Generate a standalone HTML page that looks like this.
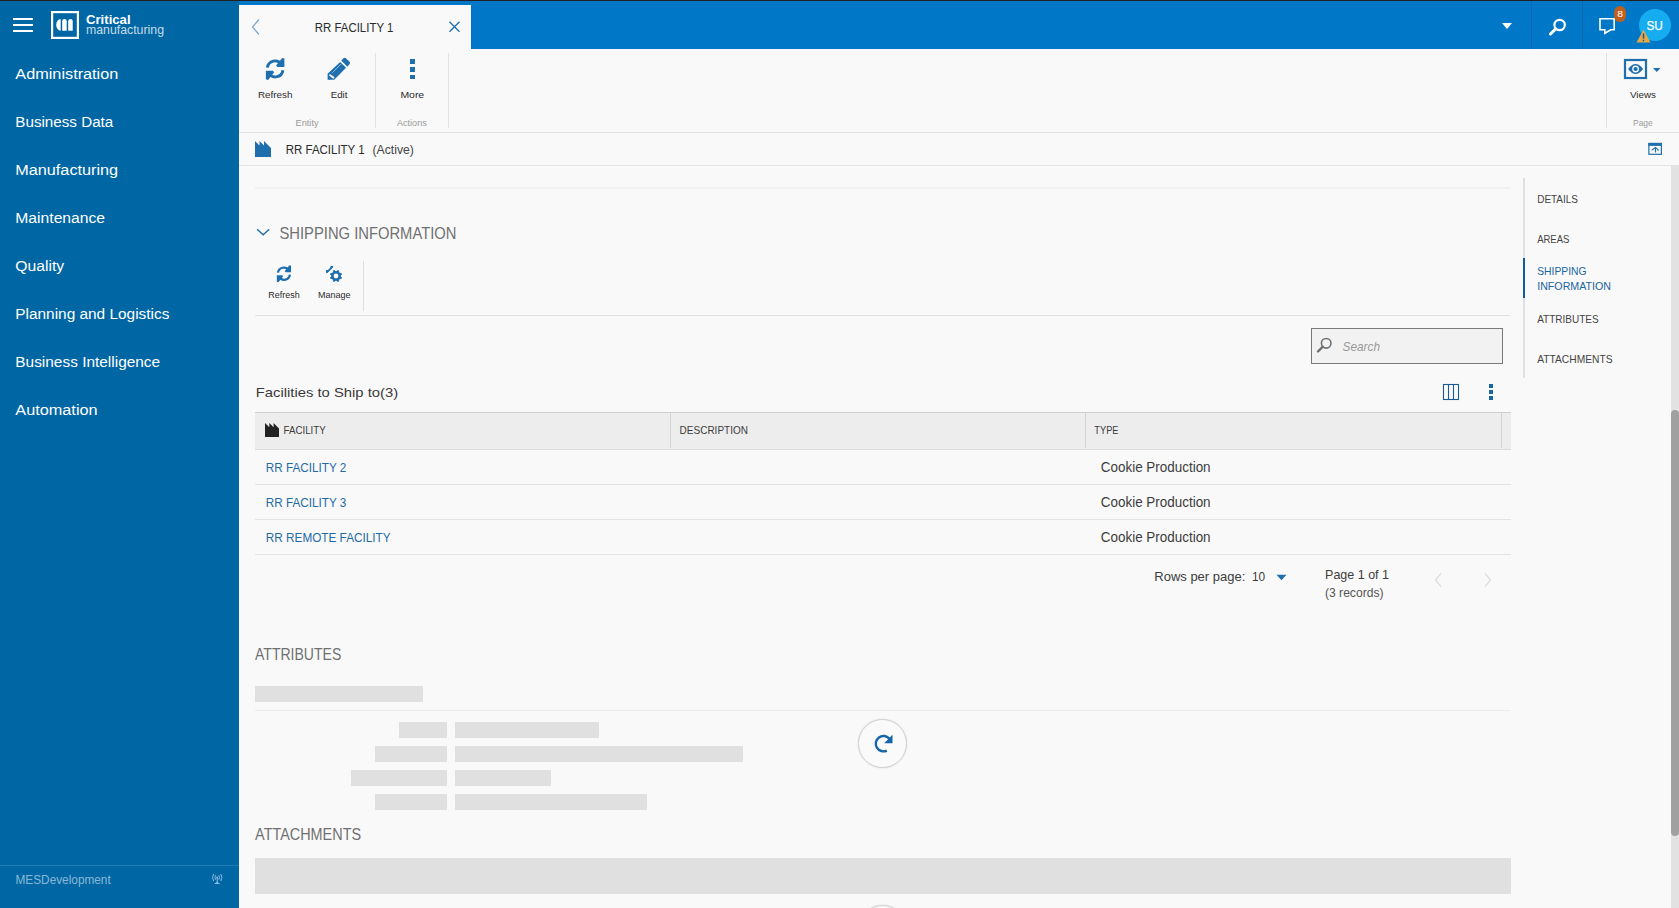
<!DOCTYPE html>
<html><head><meta charset="utf-8"><title>RR FACILITY 1</title>
<style>
html,body{margin:0;padding:0;width:1679px;height:908px;overflow:hidden;background:#f9f9f9;font-family:"Liberation Sans",sans-serif;}
.t{position:absolute;white-space:nowrap;}
.r{position:absolute;display:block;}
</style></head><body>
<div class="r" style="left:0px;top:0px;width:1679px;height:1px;background:#231f20;"></div>
<div class="r" style="left:0px;top:1px;width:239px;height:907px;background:#0066a4;"></div>
<div class="r" style="left:239px;top:1px;width:1440px;height:48px;background:#0077c7;"></div>
<div class="r" style="left:239px;top:5px;width:232px;height:44px;background:#f9f9f9;"></div>
<div class="r" style="left:1531px;top:1px;width:1px;height:48px;background:#0a68b0;"></div>
<div class="r" style="left:1582px;top:1px;width:1px;height:48px;background:#0a68b0;"></div>
<div class="r" style="left:13px;top:18px;width:20px;height:2px;background:#fff;"></div>
<div class="r" style="left:13px;top:24px;width:20px;height:2px;background:#fff;"></div>
<div class="r" style="left:13px;top:30px;width:20px;height:2px;background:#fff;"></div>
<svg class="r" style="left:50px;top:10px;" width="30" height="30" viewBox="0 0 30 30"><rect x="2.1" y="2.1" width="25.8" height="25.8" fill="none" stroke="#fff" stroke-width="2.2"/><path d="M10.7 9 A4.5 5.9 0 0 0 10.7 20.8 Z" fill="#fff"/><path d="M12.2 20.8 V11.25 A2.25 2.25 0 0 1 16.7 11.25 V20.8 Z" fill="#fff"/><path d="M18.2 20.8 V11.25 A2.25 2.25 0 0 1 22.7 11.25 V20.8 Z" fill="#fff"/></svg>
<div class="r" style="left:0px;top:865px;width:239px;height:1px;background:rgba(255,255,255,0.15);"></div>
<svg class="r" style="left:200px;top:866px;" width="32" height="26" viewBox="0 0 32 26"><g stroke="#8fbde6" fill="none" stroke-width="1"><path d="M13.6 8 Q11.4 11.5 13.6 15 M15.5 9.3 Q14.3 11.5 15.5 13.7 M18.9 9.3 Q20.1 11.5 18.9 13.7 M20.8 8 Q23 11.5 20.8 15"/><path d="M17.2 11.2 V16.8"/></g><path d="M14 17.9 H20.2 L17.2 15.8 Z" fill="#8fbde6"/><circle cx="17.2" cy="11.4" r="0.9" fill="#8fbde6"/></svg>
<svg class="r" style="left:250px;top:18px;" width="12" height="18" viewBox="0 0 12 18"><path d="M9 1.5 L2.5 9 L9 16.5" fill="none" stroke="#7da7cc" stroke-width="1.2"/></svg>
<svg class="r" style="left:448px;top:20px;" width="13" height="13" viewBox="0 0 13 13"><path d="M1.5 1.8 L11.5 11.8 M11.5 1.8 L1.5 11.8" fill="none" stroke="#1f6ead" stroke-width="1.3"/></svg>
<svg class="r" style="left:1500px;top:21px;" width="14" height="9" viewBox="0 0 14 9"><path d="M2 2 H12 L7 8 Z" fill="#fff"/></svg>
<svg class="r" style="left:1547px;top:16px;" width="22" height="22" viewBox="0 0 22 22"><circle cx="12.6" cy="9" r="5.2" fill="none" stroke="#fff" stroke-width="2.2"/><path d="M8.8 12.8 L3.5 18" stroke="#fff" stroke-width="3" stroke-linecap="round"/></svg>
<svg class="r" style="left:1597px;top:16px;" width="22" height="20" viewBox="0 0 22 20"><path d="M3 2.8 H17.2 V13.7 H13.8 L7.8 17.3 V13.7 H3 Z" fill="none" stroke="#fff" stroke-width="1.6" stroke-linejoin="miter"/></svg>
<div class="r" style="left:1614px;top:6px;width:12px;height:16px;background:#bf5f1f;border-radius:6px"></div>
<div class="r" style="left:1639px;top:9px;width:32px;height:32px;background:#16acf0;border-radius:50%"></div>
<svg class="r" style="left:1636px;top:29px;" width="16" height="15" viewBox="0 0 16 15"><path d="M7.5 0.8 L14.5 13.5 H0.5 Z" fill="#e7a84a"/><path d="M7.5 4.5 V9.5 M7.5 10.8 V12.3" stroke="#1c4f80" stroke-width="1.4"/></svg>
<div class="r" style="left:239px;top:132px;width:1440px;height:1px;background:#e3e3e3;"></div>
<div class="r" style="left:375px;top:53px;width:1px;height:75px;background:#e2e2e2;"></div>
<div class="r" style="left:448px;top:53px;width:1px;height:75px;background:#e2e2e2;"></div>
<div class="r" style="left:1606px;top:53px;width:1px;height:75px;background:#e2e2e2;"></div>
<svg class="r" style="left:262px;top:55px;" width="26" height="26" viewBox="0 0 26 26"><g transform="translate(0,0)"><path d="M5.4 12.6 A7.7 7.7 0 0 1 19.4 9.3" fill="none" stroke="#1f6ead" stroke-width="2.9"/><path d="M20.2 2.9 L22.4 3.6 V12 H15.4 L14.1 10.6 Z" fill="#1f6ead"/><g transform="rotate(180 13.15 13.9)"><path d="M5.4 12.6 A7.7 7.7 0 0 1 19.4 9.3" fill="none" stroke="#1f6ead" stroke-width="2.9"/><path d="M20.2 2.9 L22.4 3.6 V12 H15.4 L14.1 10.6 Z" fill="#1f6ead"/></g></g></svg>
<svg class="r" style="left:324px;top:54px;" width="30" height="30" viewBox="0 0 30 30"><path d="M3.6 25.8 V19.8 L16.2 7.9 L22 13.7 L10.2 25.8 Z" fill="#1f6ead"/><path d="M17.2 6.4 L19.6 4.2 Q20.8 3.3 21.9 4.2 L25.6 7.7 Q26.6 8.8 25.6 10 L23.5 12.7 Z" fill="#1f6ead"/><path d="M8.3 18.8 L17.2 9.9" stroke="#fff" stroke-width="0.7" opacity="0.75"/><path d="M6.2 21.2 L9.4 23.6" stroke="#fff" stroke-width="2" stroke-linecap="round" opacity="0.9"/></svg>
<div class="r" style="left:410px;top:59px;width:4.5px;height:4.5px;background:#1f6ead;"></div>
<div class="r" style="left:410px;top:67px;width:4.5px;height:4.5px;background:#1f6ead;"></div>
<div class="r" style="left:410px;top:74.5px;width:4.5px;height:4.5px;background:#1f6ead;"></div>
<svg class="r" style="left:1623px;top:58px;" width="26" height="22" viewBox="0 0 26 22"><rect x="2" y="2" width="21" height="18" fill="none" stroke="#1f6ead" stroke-width="2.2"/><path d="M5.1 11 Q12.6 1 20.1 11 Q12.6 21 5.1 11 Z" fill="#1f6ead"/><circle cx="12.6" cy="11" r="3.4" fill="#fbfbfb"/><circle cx="12.6" cy="11" r="2.1" fill="#1f6ead"/></svg>
<svg class="r" style="left:1652px;top:67px;" width="10" height="6" viewBox="0 0 10 6"><path d="M1 1 H8.5 L4.75 5 Z" fill="#1f6ead"/></svg>
<div class="r" style="left:239px;top:165px;width:1440px;height:1px;background:#e3e3e3;"></div>
<svg class="r" style="left:254px;top:140px;" width="18" height="18" viewBox="0 0 18 18"><path d="M1 17 V1 L5.5 5.5 V1 L10 5.5 V1 L17 8 V17 Z" fill="#1f6ead"/></svg>
<svg class="r" style="left:1640px;top:136px;" width="28" height="26" viewBox="0 0 28 26"><rect x="8.9" y="7.5" width="12.5" height="10.8" fill="none" stroke="#1f6ead" stroke-width="1.2"/><rect x="8.3" y="6.9" width="13.7" height="3" fill="#1f6ead"/><path d="M15.5 16.6 V11.6 M11.7 14.3 L15.5 11.4 L18.6 14.5" fill="none" stroke="#1f6ead" stroke-width="1.1"/></svg>
<div class="r" style="left:1671px;top:166px;width:8px;height:742px;background:#e2e2e2;"></div>
<div class="r" style="left:1671px;top:410px;width:8px;height:426px;background:#a0a0a0;border-radius:4px"></div>
<div class="r" style="left:1523px;top:178px;width:2px;height:200px;background:#e0e0e0;"></div>
<div class="r" style="left:1523px;top:258px;width:2px;height:40px;background:#0f5a9c;"></div>
<div class="r" style="left:255px;top:187px;width:1255px;height:2px;background:#f1f1f1;"></div>
<svg class="r" style="left:255px;top:226px;" width="16" height="11" viewBox="0 0 16 11"><path d="M2.1 3.2 L8.15 8.7 L14.2 3.2" fill="none" stroke="#1f6ead" stroke-width="1.4"/></svg>
<svg class="r" style="left:273px;top:262px;" width="24" height="24" viewBox="0 0 24 24"><g transform="translate(0.8,1.0) scale(0.77)"><g transform="translate(0,0)"><path d="M5.4 12.6 A7.7 7.7 0 0 1 19.4 9.3" fill="none" stroke="#1f6ead" stroke-width="2.9"/><path d="M20.2 2.9 L22.4 3.6 V12 H15.4 L14.1 10.6 Z" fill="#1f6ead"/><g transform="rotate(180 13.15 13.9)"><path d="M5.4 12.6 A7.7 7.7 0 0 1 19.4 9.3" fill="none" stroke="#1f6ead" stroke-width="2.9"/><path d="M20.2 2.9 L22.4 3.6 V12 H15.4 L14.1 10.6 Z" fill="#1f6ead"/></g></g></g></svg>
<svg class="r" style="left:322px;top:262px;" width="24" height="24" viewBox="0 0 24 24"><g fill="#1f6ead"><circle cx="14" cy="14" r="4.9"/><rect x="12.9" y="7.9" width="2.2" height="3" transform="rotate(22.5 14 14)"/><rect x="12.9" y="7.9" width="2.2" height="3" transform="rotate(67.5 14 14)"/><rect x="12.9" y="7.9" width="2.2" height="3" transform="rotate(112.5 14 14)"/><rect x="12.9" y="7.9" width="2.2" height="3" transform="rotate(157.5 14 14)"/><rect x="12.9" y="7.9" width="2.2" height="3" transform="rotate(202.5 14 14)"/><rect x="12.9" y="7.9" width="2.2" height="3" transform="rotate(247.5 14 14)"/><rect x="12.9" y="7.9" width="2.2" height="3" transform="rotate(292.5 14 14)"/><rect x="12.9" y="7.9" width="2.2" height="3" transform="rotate(337.5 14 14)"/><path d="M5.6 9.6 L9.6 5.6" stroke="#1f6ead" stroke-width="1.8"/><rect x="8.5" y="3.9" width="2.6" height="2"/><rect x="4" y="8" width="2" height="2.9"/></g><circle cx="14" cy="14" r="2.4" fill="#f9f9f9"/></svg>
<div class="r" style="left:363px;top:261px;width:1px;height:50px;background:#e0e0e0;"></div>
<div class="r" style="left:255px;top:315px;width:1255px;height:1px;background:#e0e0e0;"></div>
<div class="r" style="left:1311px;top:328px;width:192px;height:36px;background:#f2f2f2;box-sizing:border-box;border:1px solid #7a7a7a"></div>
<svg class="r" style="left:1315px;top:336px;" width="20" height="20" viewBox="0 0 20 20"><circle cx="11.2" cy="7.3" r="4.8" fill="none" stroke="#707070" stroke-width="1.6"/><path d="M7.8 10.7 L3 15.5" stroke="#707070" stroke-width="2.4" stroke-linecap="round"/></svg>
<svg class="r" style="left:1442px;top:383px;" width="18" height="18" viewBox="0 0 18 18"><rect x="1.5" y="1.5" width="15" height="15" fill="none" stroke="#1b5a9a" stroke-width="1.1"/><path d="M6.5 1.5 V16.5 M11.5 1.5 V16.5" stroke="#1b5a9a" stroke-width="1.1"/></svg>
<div class="r" style="left:1488.7px;top:384.2px;width:4.6px;height:3.9px;background:#1565a8;"></div>
<div class="r" style="left:1488.7px;top:390.1px;width:4.6px;height:3.9px;background:#1565a8;"></div>
<div class="r" style="left:1488.7px;top:396px;width:4.6px;height:3.9px;background:#1565a8;"></div>
<div class="r" style="left:255px;top:412px;width:1256px;height:1px;background:#cfcfcf;"></div>
<div class="r" style="left:255px;top:413px;width:1256px;height:36px;background:#ededed;"></div>
<div class="r" style="left:255px;top:449px;width:1256px;height:1px;background:#dcdcdc;"></div>
<div class="r" style="left:670px;top:413px;width:1px;height:35px;background:#d5d5d5;"></div>
<div class="r" style="left:1085px;top:413px;width:1px;height:35px;background:#d5d5d5;"></div>
<div class="r" style="left:1501px;top:413px;width:1px;height:35px;background:#d5d5d5;"></div>
<svg class="r" style="left:264px;top:422px;" width="16" height="16" viewBox="0 0 16 16"><path d="M1 15 V1 L5.3 5.3 V1 L9.6 5.3 V1 L15 6.5 V15 Z" fill="#222"/></svg>
<div class="r" style="left:255px;top:484px;width:1256px;height:1px;background:#e3e3e3;"></div>
<div class="r" style="left:255px;top:519px;width:1256px;height:1px;background:#e3e3e3;"></div>
<div class="r" style="left:255px;top:554px;width:1256px;height:1px;background:#e3e3e3;"></div>
<svg class="r" style="left:1275px;top:573px;" width="13" height="8" viewBox="0 0 13 8"><path d="M1.5 1.8 H11.5 L6.5 7.3 Z" fill="#1f6ead"/></svg>
<svg class="r" style="left:1433px;top:572px;" width="10" height="16" viewBox="0 0 10 16"><path d="M8 1.5 L2.5 8 L8 14.5" fill="none" stroke="#dcdcdc" stroke-width="1.2"/></svg>
<svg class="r" style="left:1483px;top:572px;" width="10" height="16" viewBox="0 0 10 16"><path d="M2 1.5 L7.5 8 L2 14.5" fill="none" stroke="#dcdcdc" stroke-width="1.2"/></svg>
<div class="r" style="left:255px;top:686px;width:168px;height:16px;background:#e0e0e0;"></div>
<div class="r" style="left:255px;top:710px;width:1255px;height:1px;background:#ececec;"></div>
<div class="r" style="left:399px;top:722px;width:48px;height:16px;background:#e0e0e0;"></div>
<div class="r" style="left:455px;top:722px;width:144px;height:16px;background:#e0e0e0;"></div>
<div class="r" style="left:375px;top:746px;width:72px;height:16px;background:#e0e0e0;"></div>
<div class="r" style="left:455px;top:746px;width:288px;height:16px;background:#e0e0e0;"></div>
<div class="r" style="left:351px;top:770px;width:96px;height:16px;background:#e0e0e0;"></div>
<div class="r" style="left:455px;top:770px;width:96px;height:16px;background:#e0e0e0;"></div>
<div class="r" style="left:375px;top:794px;width:72px;height:16px;background:#e0e0e0;"></div>
<div class="r" style="left:455px;top:794px;width:192px;height:16px;background:#e0e0e0;"></div>
<div class="r" style="left:858px;top:719px;width:49px;height:49px;background:#fafafa;box-sizing:border-box;border:1px solid #d0d0d0;border-radius:50%;box-shadow:0 0 2px rgba(0,0,0,0.12)"></div>
<svg class="r" style="left:871px;top:732px;" width="24" height="24" viewBox="0 0 24 24"><path d="M18.3 6.6 A7.7 7.7 0 1 0 15.8 18.6" fill="none" stroke="#1565a8" stroke-width="2.4"/><path d="M21.5 2.8 V11.2 H13.2 Z" fill="#1565a8"/></svg>
<div class="r" style="left:255px;top:858px;width:1256px;height:36px;background:#e0e0e0;"></div>
<div class="r" style="left:858px;top:905px;width:49px;height:49px;background:#fafafa;box-sizing:border-box;border:1px solid #d0d0d0;border-radius:50%;box-shadow:0 0 2px rgba(0,0,0,0.12)"></div>
<svg class="r" style="left:0;top:0;z-index:10" width="1679" height="908" font-family="Liberation Sans"><text x="86.00" y="24" font-size="12.3" fill="#fff" font-weight="bold" textLength="44.59" lengthAdjust="spacingAndGlyphs">Critical</text>
<text x="86.00" y="34.4" font-size="13.2" fill="rgba(255,255,255,0.78)" textLength="78.00" lengthAdjust="spacingAndGlyphs">manufacturing</text>
<text x="15.30" y="79" font-size="15.3" fill="#fff" textLength="103.02" lengthAdjust="spacingAndGlyphs">Administration</text>
<text x="15.30" y="127" font-size="15.3" fill="#fff" textLength="97.98" lengthAdjust="spacingAndGlyphs">Business Data</text>
<text x="15.30" y="175" font-size="15.3" fill="#fff" textLength="102.77" lengthAdjust="spacingAndGlyphs">Manufacturing</text>
<text x="15.30" y="223" font-size="15.3" fill="#fff" textLength="89.79" lengthAdjust="spacingAndGlyphs">Maintenance</text>
<text x="15.30" y="271" font-size="15.3" fill="#fff" textLength="48.87" lengthAdjust="spacingAndGlyphs">Quality</text>
<text x="15.30" y="319" font-size="15.3" fill="#fff" textLength="154.07" lengthAdjust="spacingAndGlyphs">Planning and Logistics</text>
<text x="15.30" y="367" font-size="15.3" fill="#fff" textLength="144.87" lengthAdjust="spacingAndGlyphs">Business Intelligence</text>
<text x="15.30" y="415" font-size="15.3" fill="#fff" textLength="82.32" lengthAdjust="spacingAndGlyphs">Automation</text>
<text x="15.50" y="884" font-size="12" fill="rgba(255,255,255,0.55)" textLength="95.22" lengthAdjust="spacingAndGlyphs">MESDevelopment</text>
<text x="314.70" y="32" font-size="13.6" fill="#2b2b2b" textLength="78.71" lengthAdjust="spacingAndGlyphs">RR FACILITY 1</text>
<text x="1617.30" y="16.8" font-size="9" fill="#fff" textLength="5.81" lengthAdjust="spacingAndGlyphs">8</text>
<text x="1646.40" y="29.7" font-size="13" fill="#fff" textLength="16.40" lengthAdjust="spacingAndGlyphs" stroke="#fff" stroke-width="0.25">SU</text>
<text x="257.90" y="98" font-size="9.8" fill="#2b2b2b" textLength="34.58" lengthAdjust="spacingAndGlyphs">Refresh</text>
<text x="330.70" y="98" font-size="9.8" fill="#2b2b2b" textLength="16.77" lengthAdjust="spacingAndGlyphs">Edit</text>
<text x="400.40" y="98" font-size="9.8" fill="#2b2b2b" textLength="23.78" lengthAdjust="spacingAndGlyphs">More</text>
<text x="295.50" y="126" font-size="9.3" fill="#9a9a9a" textLength="23.08" lengthAdjust="spacingAndGlyphs">Entity</text>
<text x="396.90" y="126" font-size="9.3" fill="#9a9a9a" textLength="29.98" lengthAdjust="spacingAndGlyphs">Actions</text>
<text x="1630.00" y="98" font-size="9.8" fill="#2b2b2b" textLength="26.00" lengthAdjust="spacingAndGlyphs">Views</text>
<text x="1633.00" y="126" font-size="9.3" fill="#9a9a9a" textLength="19.80" lengthAdjust="spacingAndGlyphs">Page</text>
<text x="285.80" y="153.8" font-size="13.4" fill="#2b2b2b" textLength="78.78" lengthAdjust="spacingAndGlyphs">RR FACILITY 1</text>
<text x="372.50" y="153.8" font-size="13.4" fill="#444" textLength="41.32" lengthAdjust="spacingAndGlyphs">(Active)</text>
<text x="1537.20" y="203.2" font-size="11" fill="#444" textLength="40.77" lengthAdjust="spacingAndGlyphs">DETAILS</text>
<text x="1537.20" y="243" font-size="11" fill="#444" textLength="32.18" lengthAdjust="spacingAndGlyphs">AREAS</text>
<text x="1537.20" y="275.3" font-size="11" fill="#1a64a0" textLength="49.41" lengthAdjust="spacingAndGlyphs">SHIPPING</text>
<text x="1537.20" y="290" font-size="11" fill="#1a64a0" textLength="73.80" lengthAdjust="spacingAndGlyphs">INFORMATION</text>
<text x="1537.20" y="322.8" font-size="11" fill="#444" textLength="61.51" lengthAdjust="spacingAndGlyphs">ATTRIBUTES</text>
<text x="1537.20" y="362.9" font-size="11" fill="#444" textLength="75.30" lengthAdjust="spacingAndGlyphs">ATTACHMENTS</text>
<text x="279.50" y="238.9" font-size="16.4" fill="#707070" textLength="176.92" lengthAdjust="spacingAndGlyphs">SHIPPING INFORMATION</text>
<text x="268.20" y="298" font-size="9.2" fill="#2b2b2b" textLength="31.48" lengthAdjust="spacingAndGlyphs">Refresh</text>
<text x="318.00" y="298" font-size="9.2" fill="#2b2b2b" textLength="32.61" lengthAdjust="spacingAndGlyphs">Manage</text>
<text x="1342.60" y="351" font-size="13.5" fill="#9a9a9a" font-style="italic" textLength="37.42" lengthAdjust="spacingAndGlyphs">Search</text>
<text x="255.70" y="396.8" font-size="13.6" fill="#3a3a3a" textLength="142.50" lengthAdjust="spacingAndGlyphs">Facilities to Ship to(3)</text>
<text x="283.60" y="433.9" font-size="10.4" fill="#3c3c3c" textLength="42.17" lengthAdjust="spacingAndGlyphs">FACILITY</text>
<text x="679.60" y="433.8" font-size="10.6" fill="#3c3c3c" textLength="68.39" lengthAdjust="spacingAndGlyphs">DESCRIPTION</text>
<text x="1094.30" y="433.9" font-size="10.4" fill="#3c3c3c" textLength="24.18" lengthAdjust="spacingAndGlyphs">TYPE</text>
<text x="265.80" y="471.9" font-size="12.9" fill="#1f6aa5" textLength="80.49" lengthAdjust="spacingAndGlyphs">RR FACILITY 2</text>
<text x="1100.80" y="471.9" font-size="13.8" fill="#3c3c3c" textLength="109.79" lengthAdjust="spacingAndGlyphs">Cookie Production</text>
<text x="265.80" y="506.9" font-size="12.9" fill="#1f6aa5" textLength="80.49" lengthAdjust="spacingAndGlyphs">RR FACILITY 3</text>
<text x="1100.80" y="506.9" font-size="13.8" fill="#3c3c3c" textLength="109.79" lengthAdjust="spacingAndGlyphs">Cookie Production</text>
<text x="265.80" y="541.9" font-size="12.9" fill="#1f6aa5" textLength="124.81" lengthAdjust="spacingAndGlyphs">RR REMOTE FACILITY</text>
<text x="1100.80" y="541.9" font-size="13.8" fill="#3c3c3c" textLength="109.79" lengthAdjust="spacingAndGlyphs">Cookie Production</text>
<text x="1154.30" y="581.4" font-size="13.5" fill="#3c3c3c" textLength="90.99" lengthAdjust="spacingAndGlyphs">Rows per page:</text>
<text x="1252.00" y="581.4" font-size="13.5" fill="#3c3c3c" textLength="13.21" lengthAdjust="spacingAndGlyphs">10</text>
<text x="1325.10" y="579.2" font-size="13.5" fill="#3c3c3c" textLength="63.89" lengthAdjust="spacingAndGlyphs">Page 1 of 1</text>
<text x="1325.00" y="596.9" font-size="12.2" fill="#555" textLength="58.48" lengthAdjust="spacingAndGlyphs">(3 records)</text>
<text x="255.00" y="660" font-size="16.4" fill="#707070" textLength="86.29" lengthAdjust="spacingAndGlyphs">ATTRIBUTES</text>
<text x="255.10" y="839.9" font-size="16.3" fill="#707070" textLength="105.98" lengthAdjust="spacingAndGlyphs">ATTACHMENTS</text></svg>
</body></html>
